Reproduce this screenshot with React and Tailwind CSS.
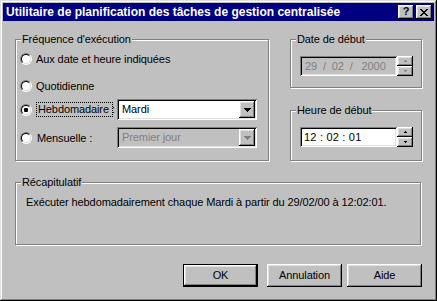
import React from "react";

const RAISED =
  "shadow-[inset_-1px_-1px_0_#000,inset_1px_1px_0_#fff,inset_-2px_-2px_0_#808080,inset_2px_2px_0_#dfdfdf]";
const SUNKEN =
  "shadow-[inset_1px_1px_0_#808080,inset_-1px_-1px_0_#fff,inset_2px_2px_0_#000,inset_-2px_-2px_0_#dfdfdf]";
const ETCHED = "border border-[#808080] shadow-[1px_1px_0_#fff,inset_1px_1px_0_#fff]";

function Radio({ checked }) {
  return (
    <div className="w-[12px] h-[12px] shrink-0 rounded-full border border-t-[#808080] border-l-[#808080] border-b-white border-r-white">
      <div className="w-full h-full rounded-full border border-t-black border-l-black border-b-[#dfdfdf] border-r-[#dfdfdf] bg-white flex items-center justify-center">
        {checked && <div className="w-[4px] h-[4px] rounded-[1px] bg-black" />}
      </div>
    </div>
  );
}

function DownArrow({ color = "#000" }) {
  return (
    <svg width="7" height="4" viewBox="0 0 7 4" shapeRendering="crispEdges">
      <rect x="0" y="0" width="7" height="1" fill={color} />
      <rect x="1" y="1" width="5" height="1" fill={color} />
      <rect x="2" y="2" width="3" height="1" fill={color} />
      <rect x="3" y="3" width="1" height="1" fill={color} />
    </svg>
  );
}

function TinyArrow({ up, color = "#000" }) {
  return (
    <svg width="3" height="2" viewBox="0 0 3 2" shapeRendering="crispEdges">
      {up ? (
        <>
          <rect x="1" y="0" width="1" height="1" fill={color} />
          <rect x="0" y="1" width="3" height="1" fill={color} />
        </>
      ) : (
        <>
          <rect x="0" y="0" width="3" height="1" fill={color} />
          <rect x="1" y="1" width="1" height="1" fill={color} />
        </>
      )}
    </svg>
  );
}

function Combo({ value, disabled }) {
  return (
    <div
      className={`w-[140px] h-[21px] p-[2px] flex ${SUNKEN} ${
        disabled ? "bg-[#c0c0c0]" : "bg-white"
      }`}
    >
      <div
        className={`flex-1 pl-[3px] leading-[17px] ${
          disabled ? "text-[#808080]" : "text-black"
        }`}
      >
        {value}
      </div>
      <div className={`w-[16px] h-full bg-[#c0c0c0] flex items-center justify-center ${RAISED}`}>
        <DownArrow color={disabled ? "#808080" : "#000"} />
      </div>
    </div>
  );
}

function Spin({ disabled }) {
  const c = disabled ? "#808080" : "#000";
  return (
    <div className="flex flex-col w-[16px] h-[20px]">
      <div className={`h-[10px] bg-[#c0c0c0] flex items-center justify-center ${RAISED}`}>
        <TinyArrow up color={c} />
      </div>
      <div className={`h-[10px] bg-[#c0c0c0] flex items-center justify-center ${RAISED}`}>
        <TinyArrow color={c} />
      </div>
    </div>
  );
}

function Group({ label, className, children }) {
  return (
    <div className={`relative ${ETCHED} ${className}`}>
      <span className="absolute left-[5px] -top-[7px] px-[1px] bg-[#c0c0c0] leading-[13px] whitespace-nowrap">
        {label}
      </span>
      {children}
    </div>
  );
}

function Button({ children, isDefault }) {
  if (isDefault) {
    return (
      <div className="w-[75px] h-[23px] border border-black">
        <div className={`w-full h-full bg-[#c0c0c0] flex items-center justify-center ${RAISED}`}>
          {children}
        </div>
      </div>
    );
  }
  return (
    <div className={`w-[75px] h-[23px] bg-[#c0c0c0] flex items-center justify-center ${RAISED}`}>
      {children}
    </div>
  );
}

export default function App() {
  return (
    <div
      className={`w-[437px] h-[301px] bg-[#c0c0c0] text-[11px] tracking-[-0.1px] text-black font-['Liberation_Sans',Arial,sans-serif] shadow-[inset_-1px_-1px_0_#000,inset_1px_1px_0_#dfdfdf,inset_-2px_-2px_0_#808080,inset_2px_2px_0_#fff] pt-[3px] px-[3px] flex flex-col`}
    >
      {/* Title bar */}
      <div className="h-[18px] bg-[#000080] flex items-center pl-[3px] pr-[2px]">
        <div className="flex-1 text-white font-bold text-[12px] tracking-normal leading-[18px] whitespace-nowrap">
          Utilitaire de planification des tâches de gestion centralisée
        </div>
        <div className="flex gap-[2px]">
          <div className={`w-[16px] h-[14px] bg-[#c0c0c0] flex items-center justify-center ${RAISED}`}>
            <span className="font-bold text-[11px] leading-[11px] -mt-[1px]">?</span>
          </div>
          <div className={`w-[16px] h-[14px] bg-[#c0c0c0] flex items-center justify-center ${RAISED}`}>
            <svg width="8" height="7" viewBox="0 0 8 7" shapeRendering="crispEdges">
              <path d="M0 0h2v1h-2zM6 0h2v1h-2zM1 1h2v1h-2zM5 1h2v1h-2zM2 2h4v1h-4zM3 3h2v1h-2zM2 4h4v1h-4zM1 5h2v1h-2zM5 5h2v1h-2zM0 6h2v1h-2zM6 6h2v1h-2z" fill="#000" />
            </svg>
          </div>
        </div>
      </div>

      {/* Content */}
      <div className="pl-[12px] flex flex-col">
        <div className="mt-[18px] flex gap-[21px]">
          <Group label="Fréquence d'exécution" className="w-[254px] h-[122px]">
            <div className="pl-[4px] pt-[13px] flex flex-col">
              <div className="h-[12px] flex items-center gap-[4px]">
                <Radio />
                <span className="leading-[12px]">Aux date et heure indiquées</span>
              </div>
              <div className="mt-[15px] h-[12px] flex items-center gap-[4px]">
                <Radio />
                <span className="leading-[12px]">Quotidienne</span>
              </div>
              <div className="mt-[7px] h-[21px] flex items-center">
                <Radio checked />
                <span className="ml-[4px] w-[77px] h-[15px] leading-[13px] pl-[1px] whitespace-nowrap border border-dotted border-black">
                  Hebdomadaire :
                </span>
                <div className="ml-[4px]">
                  <Combo value="Mardi" />
                </div>
              </div>
              <div className="mt-[7px] h-[21px] flex items-center">
                <Radio />
                <span className="ml-[5px] w-[80px] leading-[12px]">Mensuelle :</span>
                <Combo value="Premier jour" disabled />
              </div>
            </div>
          </Group>

          <div className="flex flex-col">
            <Group label="Date de début" className="w-[132px] h-[49px]">
              <div className="pl-[9px] pt-[16px] flex">
                <div className={`w-[97px] h-[20px] bg-[#c0c0c0] text-[#808080] pl-[5px] leading-[20px] whitespace-pre ${SUNKEN}`}>
                  {"29  /  02  /   2000"}
                </div>
                <Spin disabled />
              </div>
            </Group>
            <Group label="Heure de début" className="mt-[22px] w-[132px] h-[51px]">
              <div className="pl-[9px] pt-[16px] flex">
                <div className={`w-[97px] h-[20px] bg-white text-black pl-[4px] leading-[20px] whitespace-pre tracking-[0.2px] ${SUNKEN}`}>
                  {"12 : 02 : 01"}
                </div>
                <Spin />
              </div>
            </Group>
          </div>
        </div>

        <Group label="Récapitulatif" className="mt-[21px] w-[406px] h-[63px]">
          <div className="pl-[10px] pt-[13px] leading-[13px] whitespace-nowrap">
            Exécuter hebdomadairement chaque Mardi à partir du 29/02/00 à 12:02:01.
          </div>
        </Group>

        <div className="mt-[19px] flex pl-[168px] gap-[9px]">
          <Button isDefault>OK</Button>
          <div className="flex gap-[5px]">
            <Button>Annulation</Button>
            <Button>Aide</Button>
          </div>
        </div>
      </div>
    </div>
  );
}
